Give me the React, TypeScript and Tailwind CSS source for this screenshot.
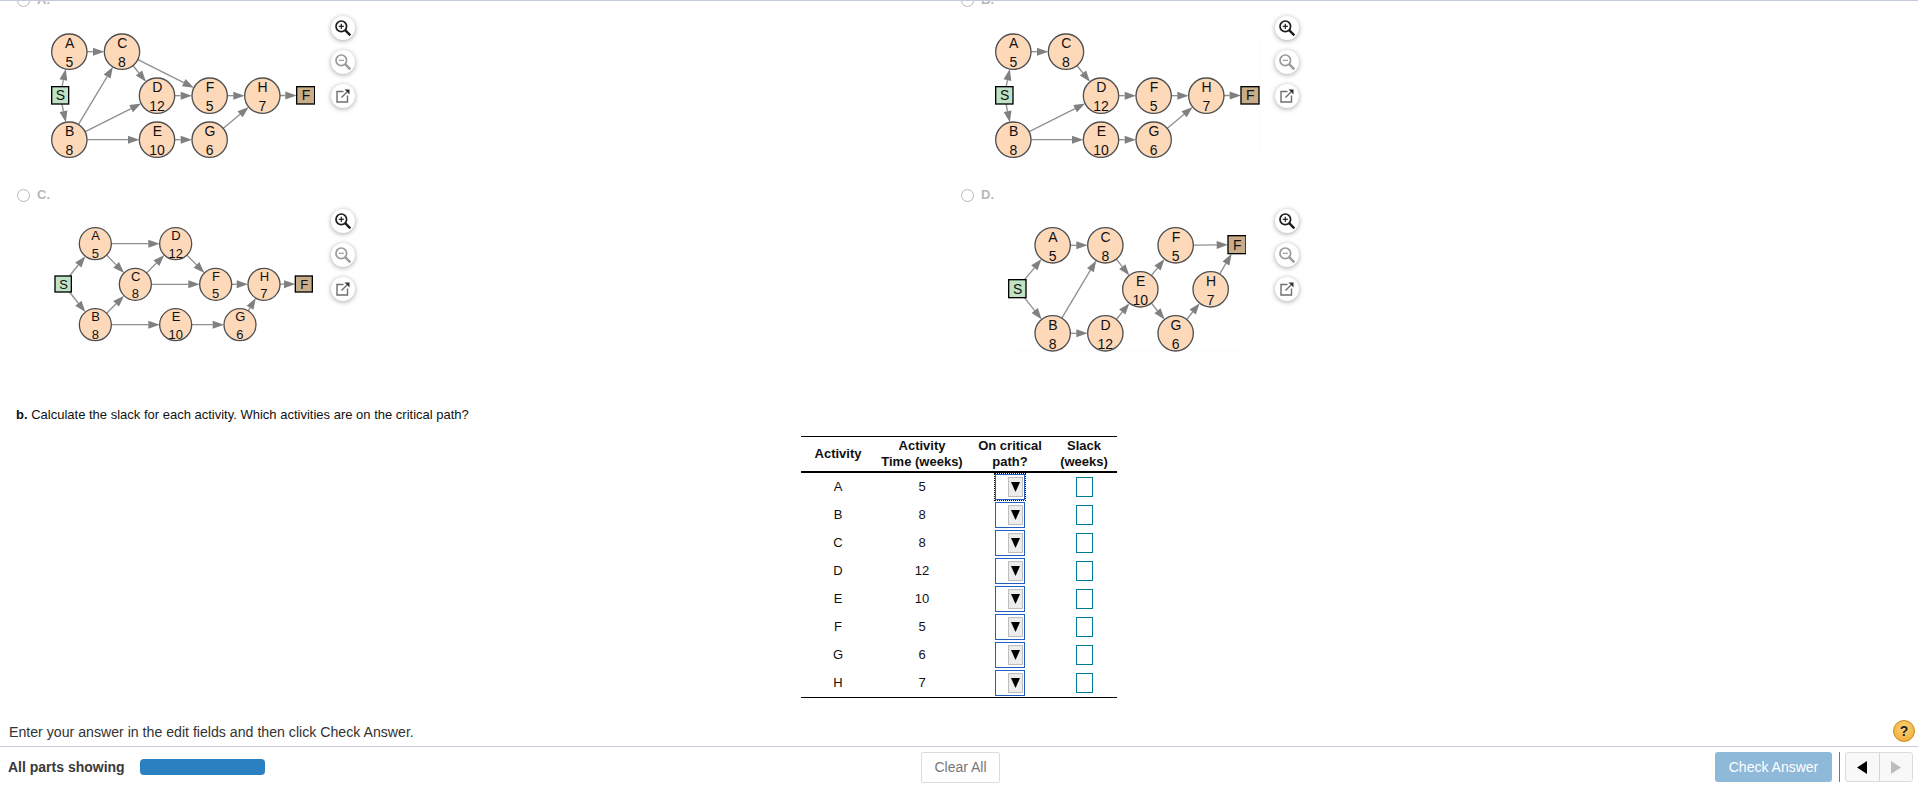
import React from "react";

type Pt = [number, number];
type Graph = {
  // all coordinates are the reference's at 3x, the viewBox brings them back down
  box: [number, number, number, number];
  r: number;
  font: number;
  nodes: Record<string, Pt>;
  times: Record<string, string>;
  start: [number, number, number, number];
  finish: [number, number, number, number];
  edges: string[];
};

const times = { A: "5", B: "8", C: "8", D: "12", E: "10", F: "5", G: "6", H: "7" };

const graphA: Graph = {
  box: [155, 100, 793, 375],
  r: 53,
  font: 42,
  times,
  nodes: { A: [210, 156], C: [368, 156], D: [473, 288], F: [631, 288], H: [789, 288], B: [210, 420], E: [473, 420], G: [631, 420] },
  start: [157, 261, 51, 52],
  finish: [892, 261, 54, 52],
  edges: ["S-A", "S-B", "A-C", "B-C", "B-D", "B-E", "C-D", "C-F", "D-F", "E-G", "F-H", "G-H", "H-Z"],
};

const graphB: Graph = {
  box: [104, 100, 794, 375],
  r: 53,
  font: 42,
  times,
  nodes: { A: [159, 156], C: [317, 156], D: [422, 288], F: [580, 288], H: [738, 288], B: [159, 420], E: [422, 420], G: [580, 420] },
  start: [106, 261, 52, 52],
  finish: [842, 261, 54, 52],
  edges: ["S-A", "S-B", "A-C", "C-D", "B-D", "B-E", "D-F", "E-G", "F-H", "G-H", "H-Z"],
};

const graphC: Graph = {
  box: [163, 143, 777, 345],
  r: 48,
  font: 39,
  times,
  nodes: { A: [287, 193], D: [528, 193], C: [407, 315], F: [648, 315], H: [793, 315], B: [287, 436], E: [528, 436], G: [721, 436] },
  start: [166, 290, 49, 48],
  finish: [887, 290, 51, 48],
  edges: ["S-A", "S-B", "A-D", "A-C", "B-C", "B-E", "C-D", "C-F", "D-F", "F-H", "E-G", "G-H", "H-Z"],
};

const graphD: Graph = {
  box: [203, 143, 715, 374],
  r: 53,
  font: 42,
  times,
  nodes: { A: [337, 198], C: [495, 198], F: [706, 198], E: [600, 330], H: [811, 330], B: [337, 462], D: [495, 462], G: [706, 462] },
  start: [205, 301, 52, 54],
  finish: [863, 169, 54, 54],
  edges: ["S-A", "S-B", "A-C", "B-C", "B-D", "C-E", "D-E", "E-F", "E-G", "F-Z", "G-H", "H-Z"],
};

function centerOf(g: Graph, id: string): Pt {
  if (id === "S") return [g.start[0] + g.start[2] / 2, g.start[1] + g.start[3] / 2];
  if (id === "Z") return [g.finish[0] + g.finish[2] / 2, g.finish[1] + g.finish[3] / 2];
  return g.nodes[id];
}

// distance from the centre of the target to where the arrow tip stops
function tipGap(g: Graph, id: string, dx: number, dy: number) {
  if (id !== "Z") return g.r;
  const hw = g.finish[2] / 2;
  const hh = g.finish[3] / 2;
  return Math.min(dx === 0 ? 1e9 : hw / Math.abs(dx), dy === 0 ? 1e9 : hh / Math.abs(dy));
}

function Edge({ g, edge }: { g: Graph; edge: string }) {
  const [from, to] = edge.split("-");
  const a = centerOf(g, from);
  const b = centerOf(g, to);
  const dx = b[0] - a[0];
  const dy = b[1] - a[1];
  const len = Math.hypot(dx, dy);
  const ux = dx / len;
  const uy = dy / len;
  const gap = tipGap(g, to, ux, uy);
  const tip: Pt = [b[0] - ux * gap, b[1] - uy * gap];
  const base: Pt = [tip[0] - ux * 34, tip[1] - uy * 34];
  const points = [
    tip,
    [base[0] - uy * 12, base[1] + ux * 12],
    [base[0] + uy * 12, base[1] - ux * 12],
  ]
    .map((p) => p.join(","))
    .join(" ");
  return (
    <g>
      <line x1={a[0]} y1={a[1]} x2={base[0]} y2={base[1]} stroke="#909090" strokeWidth={4} />
      <polygon points={points} fill="#808080" />
    </g>
  );
}

function Diagram({ g, className }: { g: Graph; className: string }) {
  const [x, y, w, h] = g.box;
  return (
    <svg width={w / 3} height={h / 3} viewBox={`${x} ${y} ${w} ${h}`} className={className}>
      <rect x={x} y={y} width={w} height={h} fill="#fff" stroke="#fcfcfc" strokeWidth={3} />
      {g.edges.map((e) => (
        <Edge key={e} g={g} edge={e} />
      ))}
      {Object.entries(g.nodes).map(([id, p]) => (
        <g key={id} fontSize={g.font} fill="#111" textAnchor="middle">
          <circle cx={p[0]} cy={p[1]} r={g.r} fill="#fdd9ba" stroke="#505050" strokeWidth={4} />
          <text x={p[0] + 1} y={p[1] - g.r * 0.21}>{id}</text>
          <text x={p[0]} y={p[1] + g.r * 0.87}>{g.times[id]}</text>
        </g>
      ))}
      <g stroke="#000" strokeWidth={4}>
        <rect x={g.start[0]} y={g.start[1]} width={g.start[2]} height={g.start[3]} fill="#bfe3c4" />
        <rect x={g.finish[0]} y={g.finish[1]} width={g.finish[2]} height={g.finish[3]} fill="#c9ad8a" />
      </g>
      <g fontSize={g.font} fill="#111" textAnchor="middle">
        <text x={centerOf(g, "S")[0] + 1} y={centerOf(g, "S")[1] + 15}>S</text>
        <text x={centerOf(g, "Z")[0] + 1} y={centerOf(g, "Z")[1] + 15}>F</text>
      </g>
    </svg>
  );
}

function ZoomIcon({ plus, color }: { plus: boolean; color: string }) {
  return (
    <svg width="18" height="18" viewBox="0 0 18 18" fill="none" stroke={color}>
      <circle cx="7.3" cy="7.3" r="5.3" strokeWidth="1.7" />
      <path d="M11.2 11.2 L16.3 16.3" strokeWidth="2.4" />
      <path d="M4.7 7.3 H9.9" strokeWidth="1.2" />
      {plus && <path d="M7.3 4.7 V9.9" strokeWidth="1.2" />}
    </svg>
  );
}

function PopoutIcon() {
  return (
    <svg width="16" height="16" viewBox="0 0 16 16" fill="none">
      <path d="M8.5 3.5 H2 V14 H12.5 V7.5" stroke="#6f6f6f" strokeWidth="1.4" />
      <path d="M6.5 9.5 L12 4" stroke="#6f6f6f" strokeWidth="1.4" />
      <path d="M9.5 1.5 H14.5 V6.5 Z" fill="#333" />
    </svg>
  );
}

function IconButton({ children }: { children: React.ReactNode }) {
  return (
    <div className="flex h-6 w-6 items-center justify-center rounded-full bg-white shadow-[0_1px_5px_rgba(0,0,0,0.35)]">
      {children}
    </div>
  );
}

function Option({ label, g, pad, top, iconsTop }: { label: string; g: Graph; pad: string; top: string; iconsTop: string }) {
  return (
    <div className="h-[195px]">
      <div className="flex h-5 items-center gap-[7px] pl-[17px]">
        <span className="h-[13px] w-[13px] rounded-full border border-[#b5b5b5] bg-white" />
        <span className="text-[13px] font-bold text-[#b8b8b8]">{label}</span>
      </div>
      <div className="flex items-start">
        <div className={`w-[331px] ${pad} ${top}`}>
          <Diagram g={g} className="block" />
        </div>
        <div className={`flex flex-col gap-[10px] ${iconsTop}`}>
          <IconButton><ZoomIcon plus color="#1c1c1c" /></IconButton>
          <IconButton><ZoomIcon plus={false} color="#9a9a9a" /></IconButton>
          <IconButton><PopoutIcon /></IconButton>
        </div>
      </div>
    </div>
  );
}

function CriticalSelect({ focused }: { focused: boolean }) {
  return (
    <div
      className={`mx-auto flex h-[26px] w-[30px] items-center justify-end border border-[#1f5fbf] pr-px ${
        focused ? "outline-1 outline-dotted outline-[#111]" : ""
      }`}
    >
      <div className="flex h-[20px] w-[15px] items-center justify-center border border-[#bdbdbd] bg-[#ececec]">
        <svg width="9" height="10" viewBox="0 0 9 10">
          <polygon points="0,0 9,0 4.5,10" fill="#000" />
        </svg>
      </div>
    </div>
  );
}

const rows = [
  ["A", "5"],
  ["B", "8"],
  ["C", "8"],
  ["D", "12"],
  ["E", "10"],
  ["F", "5"],
  ["G", "6"],
  ["H", "7"],
];

function ActivityTable() {
  return (
    <table className="mx-auto mt-[11px] w-[316px] table-fixed border-collapse border-y border-black text-center text-[13px] text-[#111]">
      <colgroup>
        <col className="w-[74px]" />
        <col className="w-[94px]" />
        <col className="w-[82px]" />
        <col className="w-[66px]" />
      </colgroup>
      <thead>
        <tr className="h-[35px] border-b-2 border-black font-bold leading-[16px]">
          <th>Activity</th>
          <th>Activity<br />Time (weeks)</th>
          <th>On critical<br />path?</th>
          <th>Slack<br />(weeks)</th>
        </tr>
      </thead>
      <tbody>
        {rows.map(([name, time], i) => (
          <tr key={name} className={i === 0 || i === 7 ? "h-[29px]" : "h-[28px]"}>
            <td>{name}</td>
            <td>{time}</td>
            <td><CriticalSelect focused={i === 0} /></td>
            <td><div className="mx-auto h-[20px] w-[17px] border border-[#00799b] bg-white" /></td>
          </tr>
        ))}
      </tbody>
    </table>
  );
}

export default function App() {
  return (
    <div className="flex h-[789px] w-[1918px] flex-col overflow-hidden border-t border-[#c3cbdd] bg-white [font-family:'Liberation_Sans',Arial,sans-serif]">
      <div className="flex min-h-0 flex-1 flex-col">
        <div className="-mt-[11px] grid grid-cols-[944px_1fr]">
          <Option label="A." g={graphA} pad="pl-[51px]" top="mt-[23px]" iconsTop="mt-[6px]" />
          <Option label="B." g={graphB} pad="pl-[51px]" top="mt-[23px]" iconsTop="mt-[6px]" />
          <Option label="C." g={graphC} pad="pl-[54px]" top="mt-[22px]" iconsTop="mt-[4px]" />
          <Option label="D." g={graphD} pad="pl-[64px]" top="mt-[22px]" iconsTop="mt-[4px]" />
        </div>
        <div className="mt-[25px] flex h-5 items-center pl-4 text-[13px] text-[#111]">
          <span><b>b.</b> Calculate the slack for each activity. Which activities are on the critical path?</span>
        </div>
        <ActivityTable />
        <div className="mt-auto flex h-[30px] items-center justify-between pl-[9px] pr-[3px]">
          <span className="mt-1 text-[14.15px] text-[#333]">Enter your answer in the edit fields and then click Check Answer.</span>
          <div className="flex h-[22px] w-[22px] items-center justify-center rounded-full border border-[#c98a1e] bg-[radial-gradient(circle_at_50%_35%,#fbd47a,#f0a52c)] text-[14px] font-bold text-[#222]">?</div>
        </div>
      </div>
      <div className="flex h-[43px] items-center border-t border-[#c3cbdd] pb-[2px] pl-2 pr-[5px]">
        <span className="w-[132px] text-[14px] font-bold text-[#3a3a3a]">All parts showing</span>
        <div className="h-4 w-[125px] rounded bg-[#2b80bf]" />
        <div className="ml-[656px] flex h-[31px] w-[79px] items-center justify-center rounded-[2px] border border-[#dcdcdc] text-[14px] text-[#777]">Clear All</div>
        <div className="ml-auto flex h-[30px] w-[117px] items-center justify-center rounded-[3px] bg-[#8fb9d8] text-[14px] text-white">Check Answer</div>
        <div className="ml-[7px] h-[30px] w-px bg-[#777]" />
        <div className="ml-[5px] flex h-[30px] w-[68px] rounded-[3px] border border-[#dcdcdc] bg-[#f8f8f8]">
          <div className="flex flex-1 items-center justify-center border-r border-[#d5d5d5]">
            <svg width="10" height="13" viewBox="0 0 10 13"><polygon points="10,0 10,13 0,6.5" fill="#000" /></svg>
          </div>
          <div className="flex flex-1 items-center justify-center">
            <svg width="10" height="13" viewBox="0 0 10 13"><polygon points="0,0 0,13 10,6.5" fill="#bdbdbd" /></svg>
          </div>
        </div>
      </div>
    </div>
  );
}
